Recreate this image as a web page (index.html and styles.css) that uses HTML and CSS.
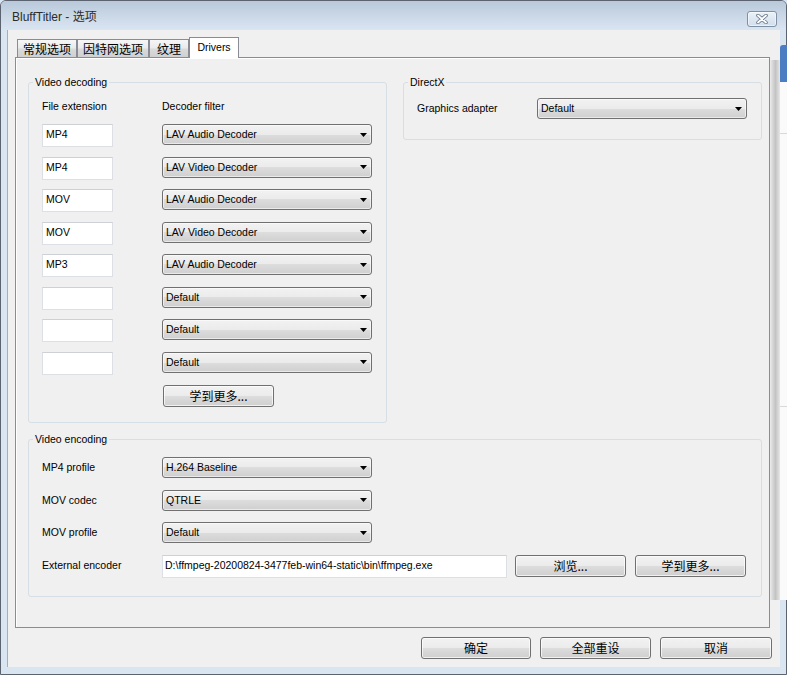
FILE: index.html
```html
<!DOCTYPE html>
<html lang="zh">
<head>
<meta charset="utf-8">
<title>BluffTitler - 选项</title>
<link rel="stylesheet" href="styles.css">
</head>
<body>
<div class="window">
  <div class="titlebar">
    <span class="title">BluffTitler - 选项</span>
    <div class="close">
      <svg width="12" height="10" viewBox="0 0 12 10"><path class="x-out" d="M2 1.5L10 8.5M10 1.5L2 8.5"/><path class="x-in" d="M2 1.5L10 8.5M10 1.5L2 8.5"/></svg>
    </div>
  </div>
  <div class="client">
    <div class="tabs">
      <div class="tab t1">常规选项</div>
      <div class="tab t2">因特网选项</div>
      <div class="tab t3">纹理</div>
      <div class="tab t4 active">Drivers</div>
    </div>
    <div class="panel">
      <div class="groups">
        <fieldset class="group vdec">
          <legend>Video decoding</legend>
          <div class="vd-body">
            <div class="vd-head"><span>File extension</span><span>Decoder filter</span></div>
            <div class="vd-grid">
              <div class="field">MP4</div><div class="select"><span>LAV Audio Decoder</span><svg class="arrow" width="7" height="4" viewBox="0 0 7 4"><path d="M0 0H7L3.5 4Z"/></svg></div>
              <div class="field">MP4</div><div class="select"><span>LAV Video Decoder</span><svg class="arrow" width="7" height="4" viewBox="0 0 7 4"><path d="M0 0H7L3.5 4Z"/></svg></div>
              <div class="field">MOV</div><div class="select"><span>LAV Audio Decoder</span><svg class="arrow" width="7" height="4" viewBox="0 0 7 4"><path d="M0 0H7L3.5 4Z"/></svg></div>
              <div class="field">MOV</div><div class="select"><span>LAV Video Decoder</span><svg class="arrow" width="7" height="4" viewBox="0 0 7 4"><path d="M0 0H7L3.5 4Z"/></svg></div>
              <div class="field">MP3</div><div class="select"><span>LAV Audio Decoder</span><svg class="arrow" width="7" height="4" viewBox="0 0 7 4"><path d="M0 0H7L3.5 4Z"/></svg></div>
              <div class="field"></div><div class="select"><span>Default</span><svg class="arrow" width="7" height="4" viewBox="0 0 7 4"><path d="M0 0H7L3.5 4Z"/></svg></div>
              <div class="field"></div><div class="select"><span>Default</span><svg class="arrow" width="7" height="4" viewBox="0 0 7 4"><path d="M0 0H7L3.5 4Z"/></svg></div>
              <div class="field"></div><div class="select"><span>Default</span><svg class="arrow" width="7" height="4" viewBox="0 0 7 4"><path d="M0 0H7L3.5 4Z"/></svg></div>
            </div>
            <div class="vd-more"><div class="btn w111">学到更多...</div></div>
          </div>
        </fieldset>
        <fieldset class="group dx">
          <legend>DirectX</legend>
          <div class="dx-body">
            <span class="lbl">Graphics adapter</span>
            <div class="select"><span>Default</span><svg class="arrow" width="7" height="4" viewBox="0 0 7 4"><path d="M0 0H7L3.5 4Z"/></svg></div>
          </div>
        </fieldset>
        <fieldset class="group venc">
          <legend>Video encoding</legend>
          <div class="ve-body">
            <span class="lbl">MP4 profile</span>
            <div class="select w210"><span>H.264 Baseline</span><svg class="arrow" width="7" height="4" viewBox="0 0 7 4"><path d="M0 0H7L3.5 4Z"/></svg></div>
            <span class="lbl">MOV codec</span>
            <div class="select w210"><span>QTRLE</span><svg class="arrow" width="7" height="4" viewBox="0 0 7 4"><path d="M0 0H7L3.5 4Z"/></svg></div>
            <span class="lbl">MOV profile</span>
            <div class="select w210"><span>Default</span><svg class="arrow" width="7" height="4" viewBox="0 0 7 4"><path d="M0 0H7L3.5 4Z"/></svg></div>
            <span class="lbl">External encoder</span>
            <div class="enc-row">
              <div class="field path">D:\ffmpeg-20200824-3477feb-win64-static\bin\ffmpeg.exe</div>
              <div class="btn w111">浏览...</div>
              <div class="btn w111 more2">学到更多...</div>
            </div>
          </div>
        </fieldset>
      </div>
    </div>
    <div class="footer">
      <div class="btn w110">确定</div>
      <div class="btn w111">全部重设</div>
      <div class="btn w112">取消</div>
    </div>
  </div>
  <div class="behind-strip"></div>
  <div class="behind-white"></div>
  <div class="behind-blue"></div>
</div>
</body>
</html>
```

FILE: styles.css
```css
* { box-sizing: border-box; }
html, body { margin: 0; padding: 0; }
body {
  width: 787px;
  height: 675px;
  overflow: hidden;
  background: #dae5f2;
  font-family: "Liberation Sans", "Noto Sans CJK SC", sans-serif;
  font-size: 10.5px;
  color: #000;
}
.window {
  position: relative;
  width: 787px;
  height: 675px;
  border: 1px solid #5a636f;
  border-radius: 6px 6px 0 0;
  background: #dae5f2;
  display: flex;
  flex-direction: column;
}
.titlebar {
  height: 29px;
  flex: none;
  display: flex;
  align-items: flex-start;
  justify-content: space-between;
  background: linear-gradient(#b9c9da, #dae5f2);
  border-radius: 5px 5px 0 0;
  padding-left: 11px;
}
.title {
  font-size: 12px;
  line-height: 14px;
  margin-top: 9px;
  color: #2b2b2b;
}
.close {
  width: 30px;
  height: 16px;
  margin: 10px 9px 0 0;
  border: 1px solid #7f8fa4;
  border-radius: 3px;
  background: linear-gradient(#eaf1f8, #d2deeb);
  box-shadow: inset 0 0 0 1px rgba(255,255,255,0.5);
  display: flex;
  align-items: center;
  justify-content: center;
}
.close svg { display: block; }
.x-out { stroke: #6b798c; stroke-width: 3.6; stroke-linecap: round; fill: none; }
.x-in { stroke: #ffffff; stroke-width: 1.8; stroke-linecap: round; fill: none; }

.client {
  flex: 1;
  margin: 0 6px 7px 6px;
  border-left: 1px solid #a3afbd;
  background: #f0f0f0;
  padding: 7px 10px 8px 7px;
  display: flex;
  flex-direction: column;
}
.tabs {
  display: flex;
  align-items: flex-end;
  height: 20px;
  flex: none;
  padding-left: 2px;
  position: relative;
  z-index: 1;
}
.tab {
  height: 18px;
  border: 1px solid #898c95;
  border-bottom: none;
  background: linear-gradient(#f6f6f6, #ebebeb 45%, #dadada 55%, #d0d0d0);
  display: flex;
  align-items: center;
  justify-content: center;
  font-size: 12px;
  line-height: 14px;
  font-family: "Noto Sans CJK SC", sans-serif;
}
.tab.active {
  height: 21px;
  margin-bottom: -1px;
  background: #fff;
  font-family: "Liberation Sans", sans-serif;
  font-size: 10.5px;
  padding-bottom: 2px;
}
.t1 { width: 60px; }
.t2 { width: 72px; }
.t3 { width: 40px; }
.t4 { width: 50px; }

.panel {
  height: 571px;
  flex: none;
  border: 1px solid #898c95;
  background: #f0f0f0;
  box-shadow: inset 1px 1px 0 #fff;
  padding: 17px 7px 0 12px;
}
.groups {
  display: grid;
  grid-template-columns: 359px 359px;
  column-gap: 16px;
  row-gap: 9px;
  align-items: start;
}
.group {
  margin: 0;
  padding: 0;
  min-width: 0;
  border: 1px solid #d5dfe5;
  border-radius: 3px;
}
.group legend {
  margin-left: 4px;
  padding: 0 2px;
  line-height: 15px;
  font-size: 10.5px;
}
.venc { grid-column: 1 / -1; }

.vd-body { padding: 9px 13px 15.5px 13px; }
.vd-head {
  display: grid;
  grid-template-columns: 71px 210px;
  column-gap: 49px;
  line-height: 14px;
  margin-bottom: 11px;
}
.vd-grid {
  display: grid;
  grid-template-columns: 71px 210px;
  column-gap: 49px;
  row-gap: 9.5px;
  grid-auto-rows: 23px;
  align-items: start;
}
.vd-more { margin-top: 10px; padding-left: 121px; }

.dx-body {
  padding: 8px 13px 20px 13px;
  display: grid;
  grid-template-columns: 120px 210px;
}
.ve-body {
  padding: 10px 13px 18px 13px;
  display: grid;
  grid-template-columns: 120px auto;
  grid-auto-rows: 23px;
  row-gap: 9.5px;
  align-items: start;
}
.lbl { line-height: 21px; }
.w210 { width: 210px; }

.field {
  height: 23px;
  background: #fff;
  border: 1px solid #dcdfe4;
  border-top-color: #cdd0d5;
  padding: 2px 3px;
  line-height: 14px;
  white-space: nowrap;
}
.field.path { width: 345px; padding-left: 2px; }

.select {
  height: 21px;
  border: 1px solid #707070;
  border-radius: 3px;
  background: linear-gradient(#f2f2f2, #ebebeb 50%, #dddddd 50%, #cfcfcf);
  box-shadow: inset 0 0 0 1px rgba(255,255,255,0.55);
  display: flex;
  align-items: center;
  justify-content: space-between;
  padding: 0 4px 0 3px;
  line-height: 19px;
  white-space: nowrap;
}
.arrow { display: block; fill: #000; }

.btn {
  height: 22px;
  border: 1px solid #707070;
  border-radius: 3px;
  background: linear-gradient(#f2f2f2, #ebebeb 50%, #dddddd 50%, #cfcfcf);
  box-shadow: inset 0 0 0 1px rgba(255,255,255,0.7);
  display: flex;
  align-items: center;
  justify-content: center;
  font-family: "Noto Sans CJK SC", sans-serif;
  font-size: 12px;
  line-height: 14px;
}
.w110 { width: 110px; }
.w111 { width: 111px; }
.w112 { width: 112px; }

.enc-row {
  display: flex;
  align-items: flex-start;
}
.enc-row .btn { margin-left: 8px; }
.enc-row .more2 { margin-left: 9px; }

.footer {
  display: flex;
  justify-content: flex-end;
  gap: 9px;
  margin-top: 9px;
  margin-right: -2px;
}

.behind-strip {
  position: absolute;
  left: 769px;
  top: 59px;
  width: 10px;
  height: 540px;
  background: linear-gradient(90deg, #ececec 0, #d4d4d4 30%, #c3c3c3 55%, #d6d6d6 80%, #e8e8e8 100%);
}
.behind-white {
  position: absolute;
  left: 779px;
  top: 81px;
  width: 8px;
  height: 518px;
  background:
    linear-gradient(#d9d9d9, #d9d9d9) 0 51px / 100% 1px no-repeat,
    linear-gradient(#d9d9d9, #d9d9d9) 0 324px / 100% 1px no-repeat,
    #fafafa;
}
.behind-blue {
  position: absolute;
  left: 779px;
  top: 44px;
  width: 8px;
  height: 37px;
  border-top-left-radius: 3px;
  background: #4c7cc2;
}
```
